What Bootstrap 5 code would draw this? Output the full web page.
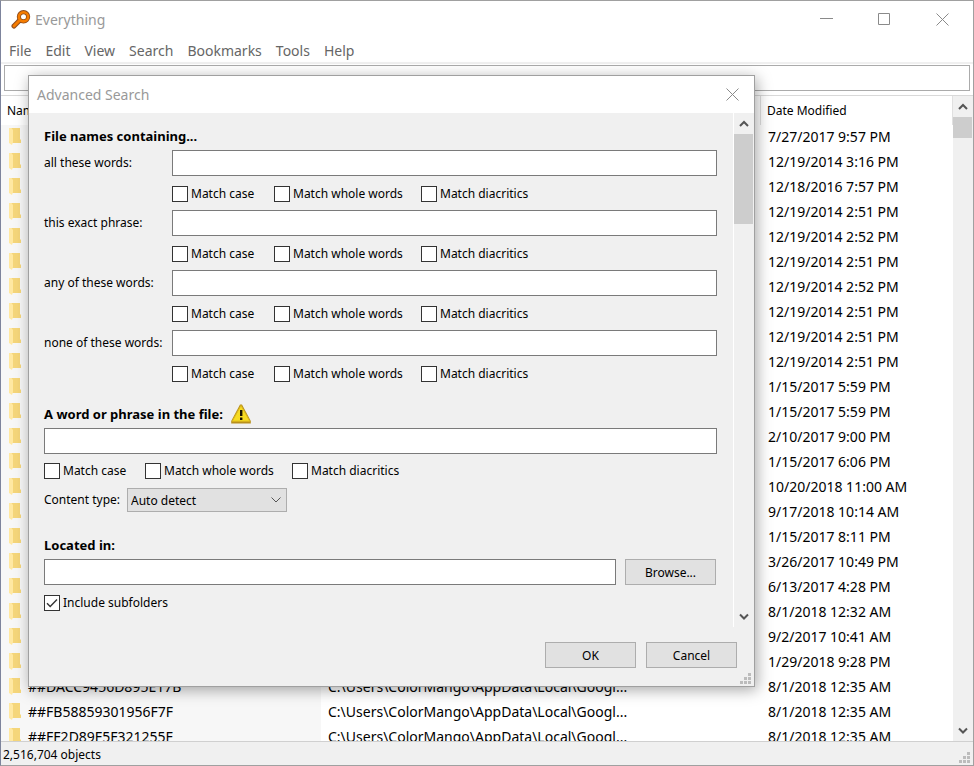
<!DOCTYPE html>
<html lang="en">
<head>
<meta charset="utf-8">
<meta name="viewport" content="width=device-width, initial-scale=1">
<title>Everything</title>
<link rel="stylesheet" href="https://cdn.jsdelivr.net/npm/bootstrap@5.3.0/dist/css/bootstrap.min.css">
<style>
  body { font-family: "Noto Sans", sans-serif; font-size: 12px; line-height: 20px; color: #000; background: #fff; }
  .app-window { border: 1px solid #a0a0a0; border-left-color: #7d849c; }
  .title-bar { height: 37px; }
  .main-title { padding: 0 2px 0 10px; }
  .title-text { font-size: 14px; color: #999; }
  .win-btn { width: 58px; height: 36px; background: none; border: 0; padding: 0; color: #8a8a8a; display: flex; align-items: center; justify-content: center; align-self: flex-start; }
  .close-small { width: 43px; }
  .menu-row { height: 24px; gap: 14px; padding: 2px 8px 0; font-size: 14px; }
  .menu-row a { color: #666; text-decoration: none; }
  .search-row { border-top: 2px solid #f0f0f0; padding: 1px 3px 4px; }
  .box-input { height: 26px; border: 1px solid #7a7a7a; border-radius: 0; background: #fff; padding: 0 4px; width: 100%; min-width: 0; }
  .search-row .box-input { border-color: #ababab; }
  .list-area { border-top: 1px solid #d9d9d9; min-height: 0; }
  .file-list { table-layout: fixed; width: 100%; border-collapse: separate; border-spacing: 0; }
  .file-list th { height: 29px; font-weight: 400; padding: 0 6px; border-right: 1px solid #e0e0e0; }
  .file-list td { height: 25px; padding: 0 7px; font-size: 14px; line-height: 23px; vertical-align: top; white-space: nowrap; overflow: hidden; }
  .file-list td:first-child { background: #f7f7f7; padding-left: 8px; }
  .name-col { width: 320px; }
  .date-col { width: 192px; }
  .folder-icon { width: 13px; height: 17px; margin-right: 6px; vertical-align: -3px; }
  .scroll-track { width: 20px; padding-right: 1px; background: #f0f0f0; flex: none; color: #555; }
  .scroll-track button { width: 19px; height: 21px; border: 0; padding: 0; background: none; color: inherit; display: flex; align-items: center; justify-content: center; }
  .scroll-thumb { background: #cdcdcd; }
  .thumb-short { height: 21px; }
  .thumb-long { height: 90px; }
  .status-line { height: 24px; border-top: 1px solid #d0d0d0; background: #f0f0f0; padding: 3px 2px 0; }
  .search-dialog { position: absolute; left: 28px; top: 75px; width: 727px; border: 1px solid #a0a0a0; background: #f0f0f0; box-shadow: 2px 3px 14px rgba(0,0,0,.35); }
  .dialog-pane { height: 514px; padding: 13px 16px 0 15px; border-right: 1px solid #fff; min-width: 0; }
  .section-head { font-size: 13px; line-height: 20px; font-weight: 700; margin: 0 0 4px; }
  .section-gap { margin-top: 23px; }
  .field-grid { display: grid; grid-template-columns: 128px 1fr; row-gap: 9px; }
  .field-grid .check-row { grid-column: 2; }
  .field-label { line-height: 26px; }
  .check-row { display: flex; height: 16px; }
  .check-item { display: flex; align-items: center; gap: 3px; line-height: 16px; padding-top: 1px; white-space: nowrap; }
  .check-item:nth-child(1) { min-width: 101px; }
  .field-grid .check-item:nth-child(1) { min-width: 102px; }
  .check-item:nth-child(2) { min-width: 147px; }
  .check-item input { appearance: none; width: 16px; height: 16px; margin: 0; border: 1px solid #333; background: #fff; }
  .check-item input:checked { background: #fff url("data:image/svg+xml,%3Csvg xmlns='http://www.w3.org/2000/svg' viewBox='0 0 14 14'%3E%3Cpath d='M2 7.3 5.2 10.5 12 3.6' fill='none' stroke='%23333' stroke-width='1.4'/%3E%3C/svg%3E"); }
  .type-row { margin-top: 10px; height: 24px; }
  .type-label { width: 83px; line-height: 24px; }
  .type-select { width: 160px; height: 24px; border: 1px solid #adadad; border-radius: 0; padding: 2px 24px 0 3px; color: #000; appearance: none; background: #e1e1e1 url("data:image/svg+xml,%3Csvg xmlns='http://www.w3.org/2000/svg' width='10' height='6' viewBox='0 0 10 6'%3E%3Cpath d='M.5.5 5 5 9.5.5' fill='none' stroke='%23555'/%3E%3C/svg%3E") no-repeat right 5px center; }
  .browse-row { gap: 9px; margin-bottom: 9px; }
  .browse-row .push-btn { margin-right: 1px; }
  .push-btn { width: 91px; height: 26px; border: 1px solid #adadad; border-radius: 0; background: #e1e1e1; padding: 2px 0 0; font-size: 12px; line-height: 20px; color: #000; flex: none; }
  .dialog-foot { height: 59px; padding: 15px 17px 0; gap: 10px; position: relative; }
  .size-grip { position: absolute; right: 2px; bottom: 1px; width: 12px; height: 12px; fill: #bcbcbc; }
</style>
<script src="https://cdn.jsdelivr.net/npm/bootstrap@5.3.0/dist/js/bootstrap.bundle.min.js"></script>
</head>
<body>
<svg class="d-none" aria-hidden="true">
  <symbol id="folder" viewBox="0 0 13 17">
    <path d="M2 0h9v11l1 1v3H2z" fill="#f5d67a"/>
    <path d="M0 0h2.500L4 2v12l-1 3-3-2z" fill="#ffe8a2"/>
  </symbol>
  <symbol id="grip" viewBox="0 0 12 12"><path d="M8 0h3v3H8zM4 4h3v3H4zM8 4h3v3H8zM0 8h3v3H0zM4 8h3v3H4zM8 8h3v3H8z"/></symbol>
  <symbol id="up" viewBox="0 0 10 8"><path d="M1 6 5 2 9 6" fill="none" stroke="currentColor" stroke-width="2"/></symbol>
  <symbol id="down" viewBox="0 0 10 8"><path d="M1 1.500 5 5.500 9 1.500" fill="none" stroke="currentColor" stroke-width="2"/></symbol>
  <symbol id="cross" viewBox="0 0 13 13"><path d="M.5.5l12 12M12.500.5l-12 12" fill="none" stroke="currentColor"/></symbol>
</svg>
<div class="app-window vh-100 d-flex flex-column position-relative overflow-hidden">
  <header class="title-bar main-title d-flex align-items-center flex-shrink-0">
    <svg width="20" height="20" viewBox="0 0 20 20" class="me-1" aria-hidden="true">
      <path d="M3 16 8 11" stroke="#8c4a1c" stroke-width="5" stroke-linecap="round"/>
      <circle cx="12.500" cy="6.800" r="4.600" fill="none" stroke="#8c4a1c" stroke-width="4.200"/>
      <path d="M3 16 8 11" stroke="#f57c00" stroke-width="3" stroke-linecap="round"/>
      <circle cx="12.500" cy="6.800" r="4.600" fill="none" stroke="#f57c00" stroke-width="2.600"/>
    </svg>
    <span class="title-text me-auto">Everything</span>
    <button class="win-btn" aria-label="Minimize"><svg width="13" height="13"><path d="M0 5.500h13" stroke="currentColor"/></svg></button>
    <button class="win-btn" aria-label="Maximize"><svg width="13" height="13"><path d="M.5.500h11v11H.5z" fill="none" stroke="currentColor"/></svg></button>
    <button class="win-btn" aria-label="Close"><svg width="13" height="13"><use href="#cross"/></svg></button>
  </header>
  <nav class="menu-row d-flex align-items-center flex-shrink-0" aria-label="Main menu">
    <a href="#">File</a><a href="#">Edit</a><a href="#">View</a><a href="#">Search</a><a href="#">Bookmarks</a><a href="#">Tools</a><a href="#">Help</a>
  </nav>
  <div class="search-row flex-shrink-0"><input class="box-input d-block" type="text" aria-label="Search"></div>
  <main class="list-area d-flex flex-grow-1">
    <div class="flex-grow-1 overflow-hidden">
      <table class="file-list">
        <colgroup><col class="name-col"><col><col class="date-col"></colgroup>
        <thead><tr><th>Name</th><th>Path</th><th>Date Modified</th></tr></thead>
        <tbody>
          <tr><td><svg class="folder-icon"><use href="#folder"/></svg></td><td></td><td>7/27/2017 9:57 PM</td></tr>
          <tr><td><svg class="folder-icon"><use href="#folder"/></svg></td><td></td><td>12/19/2014 3:16 PM</td></tr>
          <tr><td><svg class="folder-icon"><use href="#folder"/></svg></td><td></td><td>12/18/2016 7:57 PM</td></tr>
          <tr><td><svg class="folder-icon"><use href="#folder"/></svg></td><td></td><td>12/19/2014 2:51 PM</td></tr>
          <tr><td><svg class="folder-icon"><use href="#folder"/></svg></td><td></td><td>12/19/2014 2:52 PM</td></tr>
          <tr><td><svg class="folder-icon"><use href="#folder"/></svg></td><td></td><td>12/19/2014 2:51 PM</td></tr>
          <tr><td><svg class="folder-icon"><use href="#folder"/></svg></td><td></td><td>12/19/2014 2:52 PM</td></tr>
          <tr><td><svg class="folder-icon"><use href="#folder"/></svg></td><td></td><td>12/19/2014 2:51 PM</td></tr>
          <tr><td><svg class="folder-icon"><use href="#folder"/></svg></td><td></td><td>12/19/2014 2:51 PM</td></tr>
          <tr><td><svg class="folder-icon"><use href="#folder"/></svg></td><td></td><td>12/19/2014 2:51 PM</td></tr>
          <tr><td><svg class="folder-icon"><use href="#folder"/></svg></td><td></td><td>1/15/2017 5:59 PM</td></tr>
          <tr><td><svg class="folder-icon"><use href="#folder"/></svg></td><td></td><td>1/15/2017 5:59 PM</td></tr>
          <tr><td><svg class="folder-icon"><use href="#folder"/></svg></td><td></td><td>2/10/2017 9:00 PM</td></tr>
          <tr><td><svg class="folder-icon"><use href="#folder"/></svg></td><td></td><td>1/15/2017 6:06 PM</td></tr>
          <tr><td><svg class="folder-icon"><use href="#folder"/></svg></td><td></td><td>10/20/2018 11:00 AM</td></tr>
          <tr><td><svg class="folder-icon"><use href="#folder"/></svg></td><td></td><td>9/17/2018 10:14 AM</td></tr>
          <tr><td><svg class="folder-icon"><use href="#folder"/></svg></td><td></td><td>1/15/2017 8:11 PM</td></tr>
          <tr><td><svg class="folder-icon"><use href="#folder"/></svg></td><td></td><td>3/26/2017 10:49 PM</td></tr>
          <tr><td><svg class="folder-icon"><use href="#folder"/></svg></td><td></td><td>6/13/2017 4:28 PM</td></tr>
          <tr><td><svg class="folder-icon"><use href="#folder"/></svg></td><td></td><td>8/1/2018 12:32 AM</td></tr>
          <tr><td><svg class="folder-icon"><use href="#folder"/></svg></td><td></td><td>9/2/2017 10:41 AM</td></tr>
          <tr><td><svg class="folder-icon"><use href="#folder"/></svg></td><td></td><td>1/29/2018 9:28 PM</td></tr>
          <tr><td><svg class="folder-icon"><use href="#folder"/></svg>##DACC9456D895E17B</td><td>C:\Users\ColorMango\AppData\Local\Googl...</td><td>8/1/2018 12:35 AM</td></tr>
          <tr><td><svg class="folder-icon"><use href="#folder"/></svg>##FB58859301956F7F</td><td>C:\Users\ColorMango\AppData\Local\Googl...</td><td>8/1/2018 12:35 AM</td></tr>
          <tr><td><svg class="folder-icon"><use href="#folder"/></svg>##FF2D89F5F321255F</td><td>C:\Users\ColorMango\AppData\Local\Googl...</td><td>8/1/2018 12:35 AM</td></tr>
        </tbody>
      </table>
    </div>
    <div class="scroll-track d-flex flex-column">
      <button aria-label="Scroll up"><svg width="10" height="8"><use href="#up"/></svg></button>
      <div class="scroll-thumb thumb-short"></div>
      <button class="mt-auto" aria-label="Scroll down"><svg width="10" height="8"><use href="#down"/></svg></button>
    </div>
  </main>
  <footer class="status-line d-flex align-items-center flex-shrink-0 position-relative">2,516,704 objects
    <svg class="size-grip"><use href="#grip"/></svg>
  </footer>
</div>

<form class="search-dialog" role="dialog" aria-labelledby="dlg-title">
  <div class="title-bar bg-white d-flex align-items-center ps-2">
    <span class="title-text me-auto" id="dlg-title">Advanced Search</span>
    <button type="button" class="win-btn close-small" aria-label="Close dialog"><svg width="13" height="13"><use href="#cross"/></svg></button>
  </div>
  <div class="d-flex">
    <div class="dialog-pane flex-grow-1">
      <h2 class="section-head">File names containing...</h2>
      <div class="field-grid">
        <label class="field-label" for="all">all these words:</label><input class="box-input" id="all" type="text">
        <div class="check-row"><label class="check-item"><input type="checkbox">Match case</label><label class="check-item"><input type="checkbox">Match whole words</label><label class="check-item"><input type="checkbox">Match diacritics</label></div>
        <label class="field-label" for="exact">this exact phrase:</label><input class="box-input" id="exact" type="text">
        <div class="check-row"><label class="check-item"><input type="checkbox">Match case</label><label class="check-item"><input type="checkbox">Match whole words</label><label class="check-item"><input type="checkbox">Match diacritics</label></div>
        <label class="field-label" for="any">any of these words:</label><input class="box-input" id="any" type="text">
        <div class="check-row"><label class="check-item"><input type="checkbox">Match case</label><label class="check-item"><input type="checkbox">Match whole words</label><label class="check-item"><input type="checkbox">Match diacritics</label></div>
        <label class="field-label" for="none">none of these words:</label><input class="box-input" id="none" type="text">
        <div class="check-row"><label class="check-item"><input type="checkbox">Match case</label><label class="check-item"><input type="checkbox">Match whole words</label><label class="check-item"><input type="checkbox">Match diacritics</label></div>
      </div>
      <h2 class="section-head section-gap d-flex align-items-center"><label for="phrase">A word or phrase in the file:</label>
        <svg class="ms-2" width="20" height="20" viewBox="0 0 20 20" aria-hidden="true">
          <path d="M9 .5h2L19.800 17v2.500H.2V17z" fill="#b8901c"/>
          <path d="M10 1.500 18.800 17.200H1.200z" fill="#f7dc22" stroke="#dcb81c"/>
          <path d="M9 6h2.400v6H9zM9 13.500h2.400v2.500H9z" fill="#1a1400"/>
        </svg>
      </h2>
      <input class="box-input d-block mb-2" id="phrase" type="text">
      <div class="check-row"><label class="check-item"><input type="checkbox">Match case</label><label class="check-item"><input type="checkbox">Match whole words</label><label class="check-item"><input type="checkbox">Match diacritics</label></div>
      <div class="type-row d-flex"><label class="type-label" for="ctype">Content type:</label>
        <select class="type-select" id="ctype"><option>Auto detect</option></select></div>
      <h2 class="section-head section-gap"><label for="where">Located in:</label></h2>
      <div class="d-flex browse-row"><input class="box-input" id="where" type="text"><button type="button" class="push-btn">Browse...</button></div>
      <div class="check-row"><label class="check-item"><input type="checkbox" checked>Include subfolders</label></div>
    </div>
    <div class="scroll-track d-flex flex-column">
      <button type="button" aria-label="Scroll up"><svg width="10" height="8"><use href="#up"/></svg></button>
      <div class="scroll-thumb thumb-long"></div>
      <button type="button" class="mt-auto" aria-label="Scroll down"><svg width="10" height="8"><use href="#down"/></svg></button>
    </div>
  </div>
  <div class="dialog-foot d-flex justify-content-end">
    <button type="button" class="push-btn">OK</button><button type="button" class="push-btn">Cancel</button>
    <svg class="size-grip"><use href="#grip"/></svg>
  </div>
</form>
</body>
</html>
